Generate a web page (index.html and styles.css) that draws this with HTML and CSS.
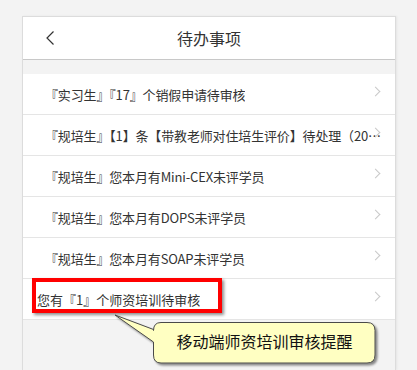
FILE: index.html
```html
<!DOCTYPE html>
<html lang="zh-CN">
<head>
<meta charset="utf-8">
<title>待办事项</title>
<link rel="stylesheet" href="styles.css">
</head>
<body>
<div class="phone">
  <header class="header">
    <span class="back"><svg width="8" height="14" viewBox="0 0 8 14"><path d="M7.5 0.5 L1 7 L7.5 13.5" fill="none" stroke="#333" stroke-width="1.2"/></svg></span>
    <h1 class="title">待办事项</h1>
    <span></span>
  </header>
  <ul class="list">
    <li class="row"><span class="text">『实习生』『17』个销假申请待审核</span><i class="chev"></i></li>
    <li class="row"><span class="text">『规培生』【1】条【带教老师对住培生评价】待处理（2023-05-01）</span><i class="chev"></i></li>
    <li class="row"><span class="text">『规培生』您本月有Mini-CEX未评学员</span><i class="chev"></i></li>
    <li class="row"><span class="text">『规培生』您本月有DOPS未评学员</span><i class="chev"></i></li>
    <li class="row"><span class="text">『规培生』您本月有SOAP未评学员</span><i class="chev"></i></li>
    <li class="row row-last"><span class="text">您有『1』个师资培训待审核</span><i class="chev"></i></li>
  </ul>
</div>
<div class="highlight"></div>
<svg class="callout" width="280" height="62" viewBox="0 0 280 62">
  <defs>
    <filter id="sh" x="-10%" y="-20%" width="130%" height="160%">
      <feDropShadow dx="2" dy="2" stdDeviation="1.2" flood-color="#000" flood-opacity="0.45"/>
    </filter>
  </defs>
  <path d="M51 12.5 H257 Q265 12.5 265 20.5 V45 Q265 53 257 53 H51 Q43.5 53 43.5 45 V32 L5 5 L43.5 19.5 V20.5 Q43.5 12.5 51 12.5 Z" fill="#ffffc2" stroke="#4a4a4a" stroke-width="1" filter="url(#sh)"/>
  <text x="154.5" y="38" text-anchor="middle" class="callout-text">移动端师资培训审核提醒</text>
</svg>
</body>
</html>
```
FILE: styles.css
```css
* { box-sizing: border-box; }
html, body {
  margin: 0;
  padding: 0;
  background: #f3f3f3;
  font-family: "Noto Sans CJK SC", "Noto Sans", sans-serif;
  color: #333;
}
body {
  width: 417px;
  height: 370px;
  overflow: hidden;
  position: relative;
}
.phone {
  margin: 16px 0 0 22px;
  width: 374px;
  height: 354px;
  border: 1px solid #dcdcdc;
  border-bottom: none;
  box-shadow: 1px 0 2px rgba(0,0,0,0.06);
  background: #f3f3f3;
}
.header {
  height: 43px;
  background: #fff;
  border-bottom: 1px solid #c8c8c8;
  display: grid;
  grid-template-columns: 1fr auto 1fr;
  align-items: center;
}
.back {
  padding-left: 23px;
  display: flex;
  align-items: center;
  height: 14px;
}
.title {
  margin: 0 0 1px;
  font-size: 16px;
  font-weight: normal;
  color: #333;
  line-height: 20px;
}
.list {
  list-style: none;
  margin: 14px 0 0;
  padding: 0;
  background: #fff;
}
.row {
  position: relative;
  height: 41px;
  border-bottom: 1px solid #e5e5e5;
  display: flex;
  align-items: center;
  padding-left: 22px;
  padding-right: 13px;
}
.row-last { padding-left: 14px; }
.text {
  font-size: 13px;
  line-height: 18px;
  color: #333;
  white-space: nowrap;
  overflow: hidden;
  text-overflow: ellipsis;
  padding-top: 1px;
  letter-spacing: -0.15px;
}
.row-last .text { letter-spacing: 0; }
.chev {
  position: absolute;
  right: 16px;
  top: 14px;
  width: 7px;
  height: 7px;
  border-top: 1px solid #c8c8c8;
  border-right: 1px solid #c8c8c8;
  transform: rotate(45deg);
}
.highlight {
  position: absolute;
  left: 32px;
  top: 278px;
  width: 190px;
  height: 35px;
  border: 4px solid #ff0000;
  box-shadow: 2px 2px 3px rgba(0,0,0,0.45);
}
.callout {
  position: absolute;
  left: 110px;
  top: 310px;
}
.callout-text {
  font-family: "Noto Sans CJK SC", sans-serif;
  font-size: 16px;
  fill: #111;
}
```
